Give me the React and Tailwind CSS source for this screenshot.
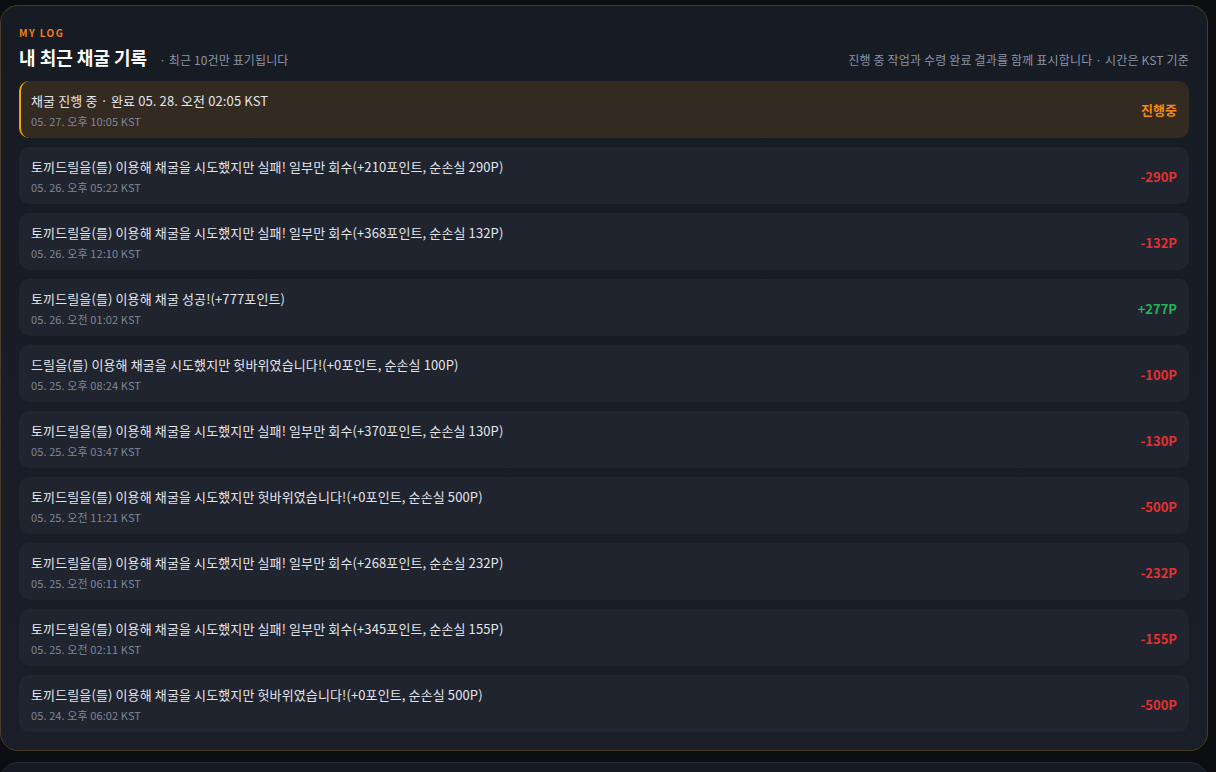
import React from "react";

const rows = [
  { t: "토끼드릴을(를) 이용해 채굴을 시도했지만 실패! 일부만 회수(+210포인트, 순손실 290P)", d: "05. 26. 오후 05:22 KST", v: "-290P", pos: false },
  { t: "토끼드릴을(를) 이용해 채굴을 시도했지만 실패! 일부만 회수(+368포인트, 순손실 132P)", d: "05. 26. 오후 12:10 KST", v: "-132P", pos: false },
  { t: "토끼드릴을(를) 이용해 채굴 성공!(+777포인트)", d: "05. 26. 오전 01:02 KST", v: "+277P", pos: true },
  { t: "드릴을(를) 이용해 채굴을 시도했지만 헛바위였습니다!(+0포인트, 순손실 100P)", d: "05. 25. 오후 08:24 KST", v: "-100P", pos: false },
  { t: "토끼드릴을(를) 이용해 채굴을 시도했지만 실패! 일부만 회수(+370포인트, 순손실 130P)", d: "05. 25. 오후 03:47 KST", v: "-130P", pos: false },
  { t: "토끼드릴을(를) 이용해 채굴을 시도했지만 헛바위였습니다!(+0포인트, 순손실 500P)", d: "05. 25. 오전 11:21 KST", v: "-500P", pos: false },
  { t: "토끼드릴을(를) 이용해 채굴을 시도했지만 실패! 일부만 회수(+268포인트, 순손실 232P)", d: "05. 25. 오전 06:11 KST", v: "-232P", pos: false },
  { t: "토끼드릴을(를) 이용해 채굴을 시도했지만 실패! 일부만 회수(+345포인트, 순손실 155P)", d: "05. 25. 오전 02:11 KST", v: "-155P", pos: false },
  { t: "토끼드릴을(를) 이용해 채굴을 시도했지만 헛바위였습니다!(+0포인트, 순손실 500P)", d: "05. 24. 오후 06:02 KST", v: "-500P", pos: false },
];

export default function App() {
  return (
    <div
      className="w-[1216px] h-[772px] overflow-hidden bg-[#0c0e12] pt-[5px]"
      style={{ fontFamily: '"Noto Sans CJK KR", "Noto Sans", sans-serif' }}
    >
      <div className="w-[1208px] h-[746px] rounded-[18px] border border-[#4a3c24] bg-gradient-to-b from-[#171b24] to-[#1a1e28] px-[18px] pt-[20px] pb-[18px]">
        <div className="text-[10px] leading-[14px] font-bold tracking-[1.4px] text-[#f07f12]">MY LOG</div>
        <div className="flex items-end justify-between mt-[4px]">
          <div className="flex items-baseline">
            <span className="text-[18px] leading-[26px] font-bold text-white">내 최근 채굴 기록</span>
            <span className="ml-[12px] text-[12px] tracking-[0.12px] text-[#8b93a4]">· 최근 10건만 표기됩니다</span>
          </div>
          <span className="text-[12px] leading-[18px] tracking-[0.17px] text-[#8b93a4] mb-[1px]">
            진행 중 작업과 수령 완료 결과를 함께 표시합니다 · 시간은 KST 기준
          </span>
        </div>
        <div className="mt-[11px] flex flex-col gap-[9px]">
          <div className="h-[57px] rounded-[10px] border-l-2 border-[#f5a00b] bg-[#332a22] pl-[10px] pr-[12px] flex items-center justify-between">
            <div className="flex flex-col pt-[1px]">
              <span className="text-[13px] leading-[18px] tracking-[0.12px] text-[#e2e5eb]">채굴 진행 중 · 완료 05. 28. 오전 02:05 KST</span>
              <span className="text-[11px] leading-[16px] tracking-[0.1px] mt-[3px] text-[#7f8798]">05. 27. 오후 10:05 KST</span>
            </div>
            <span className="text-[13px] font-bold text-[#f08a12] mt-[1px]">진행중</span>
          </div>
          {rows.map((r, i) => (
            <div key={i} className="h-[57px] rounded-[10px] bg-[#20242f] px-[12px] flex items-center justify-between">
              <div className="flex flex-col pt-[1px]">
                <span className="text-[13px] leading-[18px] tracking-[0.12px] text-[#e2e5eb]">{r.t}</span>
                <span className="text-[11px] leading-[16px] tracking-[0.1px] mt-[3px] text-[#7f8798]">{r.d}</span>
              </div>
              <span className={`text-[13px] font-bold mt-[2px] ${r.pos ? "text-[#22b455]" : "text-[#e5312f]"}`}>{r.v}</span>
            </div>
          ))}
        </div>
      </div>
      <div className="mt-[11px] w-[1208px] h-[40px] rounded-t-[18px] border border-[#272c36] bg-[#151922]" />
    </div>
  );
}
